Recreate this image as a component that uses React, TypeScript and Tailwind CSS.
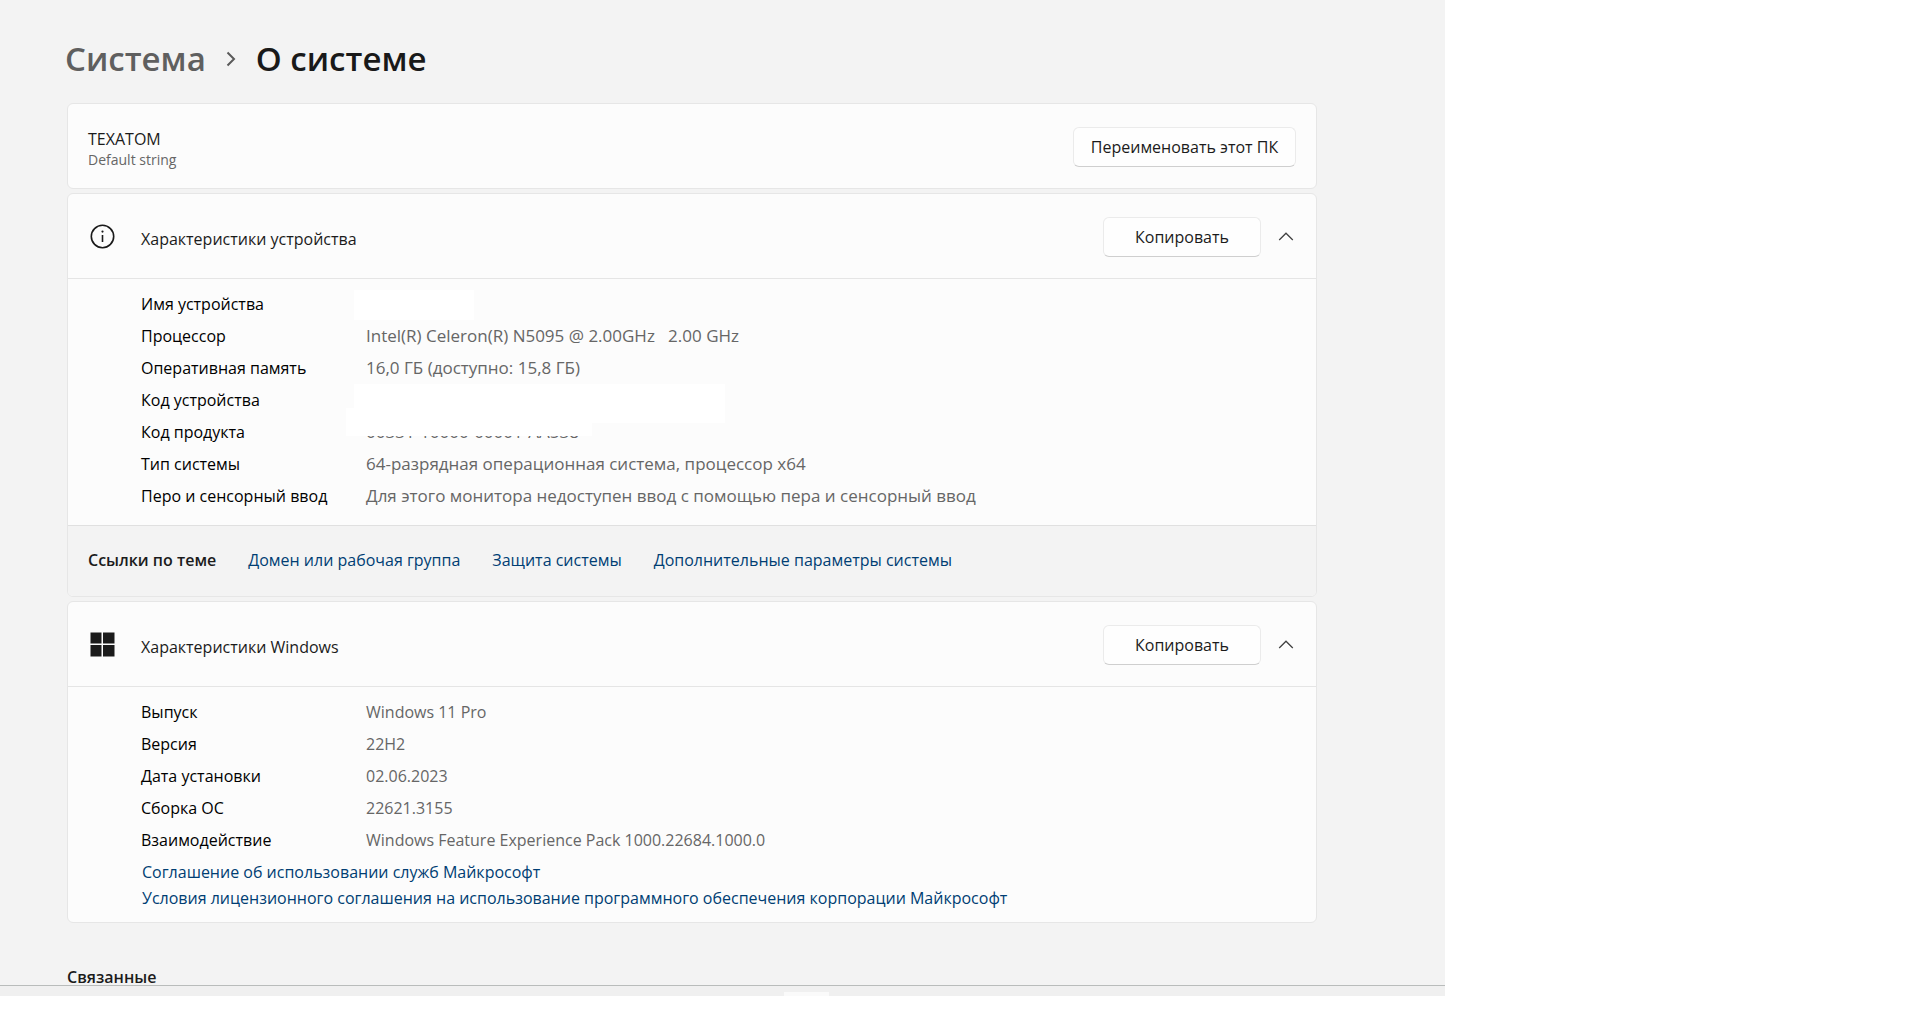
import type { ReactNode } from 'react';

function Card({ children }: { children: ReactNode }) {
  return (
    <section className="overflow-hidden rounded-md border border-[#e6e6e6] bg-[#fcfcfc]">
      {children}
    </section>
  );
}

function PushButton({ children, wide = false }: { children: ReactNode; wide?: boolean }) {
  return (
    <button
      type="button"
      className={`h-10 rounded-md border border-[#ebebeb] border-b-[#cfcfcf] bg-[#fefefe] text-[#1b1b1b] ${
        wide ? 'w-[158px]' : 'w-[223px]'
      }`}
    >
      {children}
    </button>
  );
}

function CardHeader({ icon, title }: { icon: ReactNode; title: string }) {
  return (
    <header className="flex h-[85px] items-center border-b border-[#e5e5e5] pt-px pr-[21px] pl-[22px]">
      {icon}
      <h2 className="ml-[26px] flex-1 pt-1 text-[#1b1b1b]">{title}</h2>
      <PushButton wide>Копировать</PushButton>
      <button type="button" aria-label="Свернуть" className="ml-4 flex h-8 w-[18px] items-center justify-center">
        <svg width="16" height="9" viewBox="0 0 16 9" fill="none" stroke="#444" strokeWidth="1.3">
          <path d="M1.2 8 8 1.2 14.8 8" />
        </svg>
      </button>
    </header>
  );
}

function Row({ label, children }: { label: string; children: ReactNode }) {
  return (
    <div className="grid h-8 grid-cols-[225px_1fr] items-center">
      <dt className="text-[16px] text-black">{label}</dt>
      <dd className="relative whitespace-pre text-[#666]">{children}</dd>
    </div>
  );
}

const link = 'text-[#003e73] hover:underline';

export default function App() {
  return (
    <div className="grid min-h-screen grid-cols-[1445fr_465fr] items-start bg-white font-['Open_Sans','Noto_Sans',sans-serif] text-[16px] leading-6">
      <div className="flex flex-col bg-[#f3f3f3]">
        <main className="flex flex-col border-b border-[#b9bcbb] pr-[128px] pl-[67px]">
          <nav aria-label="Навигация" className="flex h-[103px] items-center pt-[14px] text-[33px] leading-10 font-semibold">
            <a href="#system" className="-ml-0.5 text-[#5f5f5f]">
              Система
            </a>
            <svg width="10" height="16" viewBox="0 0 10 16" fill="none" stroke="#5a5a5a" strokeWidth="2" className="mx-5">
              <path d="M1.5 1.5 8 8l-6.5 6.5" />
            </svg>
            <h1 className="text-[#191919]">О системе</h1>
          </nav>

          <div className="flex flex-col gap-1">
            <Card>
              <div className="flex h-[84px] items-center justify-between px-5 pt-0.5">
                <div className="pt-1">
                  <p className="leading-[22px] text-[#1b1b1b]">TEXATOM</p>
                  <p className="text-[14px] leading-5 text-[#666]">Default string</p>
                </div>
                <PushButton>Переименовать этот ПК</PushButton>
              </div>
            </Card>

            <Card>
              <CardHeader
                title="Характеристики устройства"
                icon={
                  <svg width="25" height="25" viewBox="0 0 25 25" fill="none" stroke="#1b1b1b" strokeWidth="1.6">
                    <circle cx="12.5" cy="12.5" r="11.2" />
                    <path d="M12.5 11v7" />
                    <circle cx="12.5" cy="7.6" r="1.1" fill="#1b1b1b" stroke="none" />
                  </svg>
                }
              />
              <dl className="pt-[9px] pb-[13px] pl-[73px] text-[17px]">
                <Row label="Имя устройства">
                  <span className="absolute -top-3.5 -left-3 h-[30px] w-[120px] bg-white" />
                </Row>
                <Row label="Процессор">{'Intel(R) Celeron(R) N5095 @ 2.00GHz   2.00 GHz'}</Row>
                <Row label="Оперативная память">16,0 ГБ (доступно: 15,8 ГБ)</Row>
                <Row label="Код устройства">
                  <span className="absolute -top-4 -left-3 z-10 h-[39px] w-[371px] bg-white" />
                </Row>
                <Row label="Код продукта">
                  00331-10000-00001-AA538
                  <span className="absolute -top-3 -left-5 h-7 w-[246px] bg-white" />
                </Row>
                <Row label="Тип системы">64-разрядная операционная система, процессор x64</Row>
                <Row label="Перо и сенсорный ввод">
                  Для этого монитора недоступен ввод с помощью пера и сенсорный ввод
                </Row>
              </dl>
              <footer className="flex h-[71px] items-center gap-8 border-t border-[#e0e0e0] bg-[#f3f3f3] pb-0.5 pl-5">
                <h3 className="font-semibold text-[#1b1b1b]">Ссылки по теме</h3>
                <a href="#domain" className={link}>Домен или рабочая группа</a>
                <a href="#protection" className={link}>Защита системы</a>
                <a href="#advanced" className={link}>Дополнительные параметры системы</a>
              </footer>
            </Card>

            <Card>
              <CardHeader
                title="Характеристики Windows"
                icon={
                  <svg width="25" height="25" viewBox="0 0 25 25" fill="#1b1b1b">
                    <path d="M0.5 0.5h11v11h-11zM13 0.5h11.5v11H13zM0.5 13h11v11.5h-11zM13 13h11.5v11.5H13z" />
                  </svg>
                }
              />
              <div className="pt-[9px] pb-3 pl-[73px]">
                <dl>
                  <Row label="Выпуск">Windows 11 Pro</Row>
                  <Row label="Версия">22H2</Row>
                  <Row label="Дата установки">02.06.2023</Row>
                  <Row label="Сборка ОС">22621.3155</Row>
                  <Row label="Взаимодействие">Windows Feature Experience Pack 1000.22684.1000.0</Row>
                </dl>
                <div className="flex flex-col items-start gap-0.5 pt-1 pl-px">
                  <a href="#services" className={link}>Соглашение об использовании служб Майкрософт</a>
                  <a href="#license" className={link}>
                    Условия лицензионного соглашения на использование программного обеспечения корпорации Майкрософт
                  </a>
                </div>
              </div>
            </Card>
          </div>

          <h2 className="mt-[46px] leading-4 font-semibold text-[#1b1b1b]">Связанные</h2>
        </main>
        <div className="flex h-[10px] items-end justify-center bg-[#f0f0f0] pl-[168px]">
          <div className="h-1 w-[45px] bg-[#fafafa]" />
        </div>
      </div>
    </div>
  );
}
